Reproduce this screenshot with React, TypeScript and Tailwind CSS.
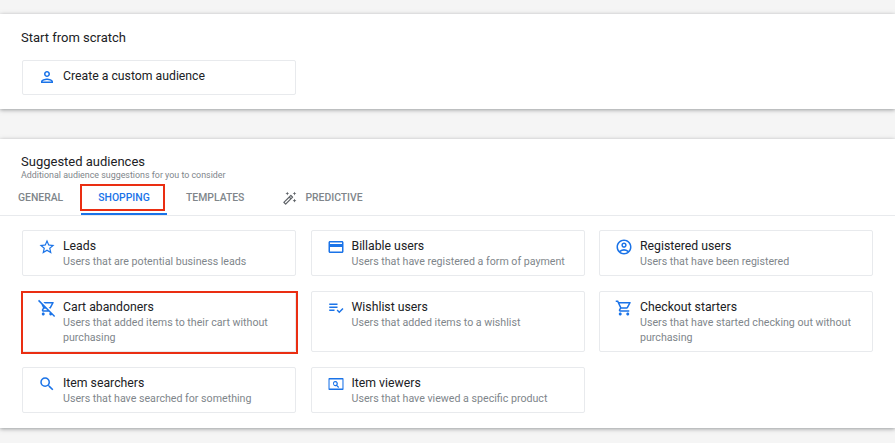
import type { ReactNode } from 'react';
import {
  MdOutlineAccountCircle,
  MdOutlineAutoFixHigh,
  MdOutlineCreditCard,
  MdOutlinePerson,
  MdOutlineRemoveShoppingCart,
  MdOutlineShoppingCart,
  MdPlaylistAddCheck,
  MdSearch,
  MdStarBorder,
} from 'react-icons/md';

function ViewerIcon() {
  return (
    <svg width="18" height="18" viewBox="0 0 24 24" fill="#1a73e8">
      <path d="M3 4h18a1 1 0 0 1 1 1v14a1 1 0 0 1-1 1H3a1 1 0 0 1-1-1V5a1 1 0 0 1 1-1zm.4 2v12h17.2V6H3.4z" fillRule="evenodd" />
      <path d="M11 8a3.5 3.5 0 0 1 2.8 5.6l2.4 2.4-1.2 1.2-2.4-2.4A3.5 3.5 0 1 1 11 8zm0 1.7a1.8 1.8 0 1 0 0 3.6 1.8 1.8 0 0 0 0-3.6z" fillRule="evenodd" />
    </svg>
  );
}

function Option({ icon, title, desc, flagged, className }: { icon: ReactNode; title: string; desc?: string; flagged?: boolean; className?: string }) {
  return (
    <div className={`relative flex gap-[7px] rounded-[2px] border border-[#e8eaed] bg-white pl-[15px] pr-2 pt-[7px] ${className ?? ''}`}>
      <div className="w-[18px] h-[18px] shrink-0 text-[#1a73e8] text-[18px]">{icon}</div>
      <div>
        <div className="text-[12.25px] leading-[16px] text-[#202124]">{title}</div>
        {desc && <div className="text-[10.65px] leading-[15px] text-[#80868b]">{desc}</div>}
      </div>
      {flagged && <span className="absolute left-[-2px] top-[-1px] h-[63px] w-[277px] border-2 border-[#ea2e12]" />}
    </div>
  );
}

export default function App() {
  return (
    <div className="h-[443px] overflow-hidden bg-[#f5f5f5] pt-[14px] font-['Roboto',sans-serif]">
      {/* Start from scratch */}
      <section className="h-[95px] bg-white pl-[21px] pt-[15px] shadow-[0_1px_4px_rgba(60,64,67,0.5)]">
        <h2 className="text-[13px] leading-[18px] text-[#202124]">Start from scratch</h2>
        <div className="mt-[13px] ml-px w-[274px]">
          <Option className="h-[35px]" icon={<MdOutlinePerson />} title="Create a custom audience" />
        </div>
      </section>

      {/* Suggested audiences */}
      <section className="mt-[30px] h-[289px] bg-white pt-[15px] shadow-[0_1px_4px_rgba(60,64,67,0.5)]">
        <div className="pl-[21px]">
          <h2 className="text-[13px] leading-[16px] text-[#202124]">Suggested audiences</h2>
          <p className="text-[8.9px] leading-[10px] text-[#80868b]">Additional audience suggestions for you to consider</p>
        </div>

        <div className="mt-px flex h-[35px] border-b border-[#e8eaed] text-[10.4px] font-medium text-[#80868b]">
          <div className="ml-[18px] mt-[4px] flex h-[26px] w-[45px] items-center">GENERAL</div>
          <div className="relative ml-[18px] flex h-[34px] w-[86px] justify-center border-b-2 border-[#1a73e8] pt-[8px] leading-[18px] text-[#1a73e8]">
            SHOPPING
            <span className="absolute left-[-1px] top-[3px] h-[27px] w-[85px] border-2 border-[#ea2e12]" />
          </div>
          <div className="ml-[19px] mt-[4px] flex h-[26px] items-center">TEMPLATES</div>
          <div className="ml-[38px] mt-[4px] flex h-[26px] items-center gap-[8px]">
            <MdOutlineAutoFixHigh className="text-[15px] text-[#5f6368]" />
            PREDICTIVE
          </div>
        </div>

        <div className="ml-[22px] mt-[14px] grid w-[851px] grid-cols-[274px_274px_274px] gap-x-[14.5px] gap-y-[15px]">
          <Option className="h-[46px]" icon={<MdStarBorder />} title="Leads" desc="Users that are potential business leads" />
          <Option className="h-[46px]" icon={<MdOutlineCreditCard />} title="Billable users" desc="Users that have registered a form of payment" />
          <Option className="h-[46px]" icon={<MdOutlineAccountCircle />} title="Registered users" desc="Users that have been registered" />
          <Option className="h-[61px]" flagged icon={<MdOutlineRemoveShoppingCart />} title="Cart abandoners" desc="Users that added items to their cart without purchasing" />
          <Option className="h-[61px]" icon={<MdPlaylistAddCheck />} title="Wishlist users" desc="Users that added items to a wishlist" />
          <Option className="h-[61px]" icon={<MdOutlineShoppingCart />} title="Checkout starters" desc="Users that have started checking out without purchasing" />
          <Option className="h-[46px]" icon={<MdSearch />} title="Item searchers" desc="Users that have searched for something" />
          <Option className="h-[46px]" icon={<ViewerIcon />} title="Item viewers" desc="Users that have viewed a specific product" />
        </div>
      </section>
    </div>
  );
}
